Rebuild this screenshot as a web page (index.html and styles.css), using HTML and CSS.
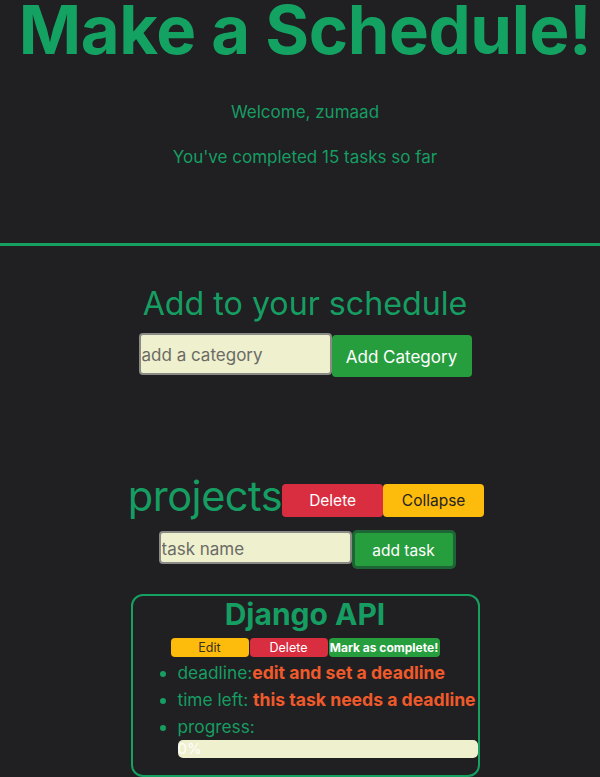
FILE: index.html
```html
<!DOCTYPE html>
<html lang="en">
<head>
<meta charset="utf-8">
<title>Make a Schedule!</title>
<link rel="stylesheet" href="styles.css">
</head>
<body>
<header class="top">
  <h1 class="title">Make a Schedule!</h1>
  <p class="welcome first">Welcome, zumaad</p>
  <p class="welcome">You've completed 15 tasks so far</p>
</header>
<hr class="divider">
<main class="main">
  <section class="add">
    <h2 class="add-title">Add to your schedule</h2>
    <div class="add-row">
      <input class="field field-cat" type="text" placeholder="add a category">
      <button class="btn btn-green btn-cat">Add Category</button>
    </div>
  </section>
  <section class="category">
    <div class="cat-head">
      <h2 class="cat-name">projects</h2>
      <button class="btn btn-red btn-head">Delete</button>
      <button class="btn btn-yellow btn-head">Collapse</button>
    </div>
    <div class="task-row">
      <input class="field field-task" type="text" placeholder="task name">
      <button class="btn btn-green btn-task">add task</button>
    </div>
    <div class="card">
      <h3 class="card-title">Django API</h3>
      <div class="card-actions">
        <button class="sbtn sbtn-yellow">Edit</button>
        <button class="sbtn sbtn-red">Delete</button>
        <button class="sbtn sbtn-green">Mark as complete!</button>
      </div>
      <ul class="details">
        <li>deadline:<strong class="warn">edit and set a deadline</strong></li>
        <li>time left: <strong class="warn">this task needs a deadline</strong></li>
        <li>progress:
          <div class="bar"><span class="bar-label">0%</span></div>
        </li>
      </ul>
    </div>
  </section>
</main>
</body>
</html>
```

FILE: styles.css
```css
* { box-sizing: border-box; }

html, body {
  margin: 0;
  padding: 0;
  background: #201f22;
  height: 100%;
  overflow: hidden;
}

body {
  font-family: Inter, "Noto Sans", sans-serif;
  color: #169d62;
}

.top {
  padding-left: 10px;
  text-align: center;
  padding-bottom: 72px;
}

.title {
  margin: 0;
  font-size: 67px;
  line-height: 60px;
  font-weight: 700;
  color: #14a263;
  letter-spacing: -0.4px;
  white-space: nowrap;
}

.welcome {
  margin: 18px 0 0;
  font-size: 17px;
  line-height: 27px;
}

.welcome.first { margin-top: 39px; }

.divider {
  margin: 0;
  border: none;
  height: 3px;
  background: #16a062;
}

.main {
  padding-left: 10px;
  text-align: center;
}

.add-title {
  margin: 38px 0 0;
  font-size: 32.2px;
  line-height: 40px;
  font-weight: 400;
}

.add-row {
  display: flex;
  justify-content: center;
  align-items: flex-start;
  margin-top: 9px;
}

.field {
  font-family: inherit;
  font-size: 17px;
  background: #eff0cd;
  border: 2px solid #8a8a86;
  border-radius: 4px;
  padding: 2px 1px 0;
  color: #333;
  outline: none;
}

.field::placeholder { color: #6b6b66; }

.field-cat {
  width: 193px;
  height: 42px;
}

.btn {
  font-family: inherit;
  border: none;
  border-radius: 4px;
  cursor: pointer;
  color: #fff;
}

.btn-green { background: #279e3e; }
.btn-red { background: #d92e40; }
.btn-yellow { background: #fdbb0b; color: #222; }

.btn-cat {
  width: 140px;
  height: 42px;
  margin-top: 2px;
  font-size: 17px;
  padding-top: 2px;
}

.category { margin-top: 95px; }

.cat-head {
  display: flex;
  justify-content: center;
  align-items: flex-start;
  padding-left: 2px;
}

.cat-name {
  margin: 0;
  font-size: 41.5px;
  line-height: 48px;
  font-weight: 400;
  letter-spacing: -0.5px;
}

.btn-head {
  width: 101px;
  height: 33px;
  margin-top: 12px;
  font-size: 15.5px;
}

.task-row {
  display: flex;
  justify-content: center;
  align-items: flex-start;
  margin-top: 10px;
  padding-left: 4px;
}

.field-task {
  width: 193px;
  height: 33px;
  margin-top: 1px;
}

.btn-task {
  width: 104px;
  height: 39px;
  font-size: 15.5px;
  border: 3px solid #1d6534;
  border-radius: 5px;
  padding-top: 2px;
}

.card {
  margin: 25px auto 0;
  width: 349px;
  border: 2px solid #16a062;
  border-radius: 12px;
  padding-bottom: 17px;
}

.card-title {
  margin: 0;
  font-size: 30px;
  line-height: 36px;
  font-weight: 700;
}

.card-actions {
  display: flex;
  justify-content: center;
  margin-top: 6px;
}

.sbtn {
  font-family: inherit;
  font-size: 12.5px;
  height: 19px;
  border: none;
  border-radius: 4px;
  padding: 0;
  color: #fff;
}

.sbtn-yellow { background: #fdbb0b; color: #3a3020; width: 78px; }
.sbtn-red { background: #d92e40; width: 78px; margin-left: 1px; }
.sbtn-green { background: #279e3e; width: 111px; margin-left: 1px; font-weight: 700; font-size: 12px; }

.details {
  margin: 2px 0 0;
  padding-left: 45px;
  text-align: left;
  font-size: 17.3px;
  line-height: 27px;
  white-space: nowrap;
}

.warn {
  color: #ef5a2b;
  font-weight: 700;
  font-size: 17.6px;
}

.bar {
  height: 18px;
  background: #eff0cd;
  border-radius: 5px;
  line-height: 18px;
  font-size: 15px;
}

.bar-label {
  color: #fff;
  display: block;
  width: 0;
}
```
